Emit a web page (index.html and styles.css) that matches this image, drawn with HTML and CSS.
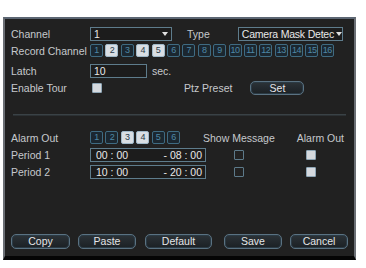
FILE: index.html
```html
<!DOCTYPE html>
<html lang="en">
<head>
  <meta charset="UTF-8">
  <title>Alarm Setup</title>
  <link rel="stylesheet" href="styles.css">
</head>
<body>

  <div class="panel">

    <div class="row">
      <span class="label">Channel</span>
      <div class="select sel-channel"><span>1</span><span class="arrow"></span></div>
      <span class="label type-label">Type</span>
      <div class="select sel-type"><span class="clip">Camera Mask Detec</span><span class="arrow"></span></div>
    </div>

    <div class="row">
      <span class="label">Record Channel</span>
      <div class="boxes">
        <span class="box">1</span>
        <span class="box on">2</span>
        <span class="box">3</span>
        <span class="box on">4</span>
        <span class="box on">5</span>
        <span class="box">6</span>
        <span class="box">7</span>
        <span class="box">8</span>
        <span class="box">9</span>
        <span class="box">10</span>
        <span class="box">11</span>
        <span class="box">12</span>
        <span class="box">13</span>
        <span class="box">14</span>
        <span class="box">15</span>
        <span class="box">16</span>
      </div>
    </div>

    <div class="row latch">
      <span class="label">Latch</span>
      <div class="input sel-latch">10</div>
      <span class="unit">sec.</span>
    </div>

    <div class="row">
      <span class="label">Enable Tour</span>
      <span class="check light tour-check"></span>
      <span class="label ptz-label">Ptz Preset</span>
      <span class="btn btn-set">Set</span>
    </div>

    <div class="sep"></div>

    <div class="row alarm">
      <span class="label">Alarm Out</span>
      <div class="boxes">
        <span class="box">1</span>
        <span class="box">2</span>
        <span class="box on">3</span>
        <span class="box on">4</span>
        <span class="box">5</span>
        <span class="box">6</span>
      </div>
      <span class="label show-label">Show Message</span>
      <span class="label out-label">Alarm Out</span>
    </div>

    <div class="row">
      <span class="label">Period 1</span>
      <div class="input period"><span>00 : 00</span><span>- 08 : 00</span></div>
      <span class="check dark show-check"></span>
      <span class="check light out-check"></span>
    </div>

    <div class="row">
      <span class="label">Period 2</span>
      <div class="input period"><span>10 : 00</span><span>- 20 : 00</span></div>
      <span class="check dark show-check"></span>
      <span class="check light out-check"></span>
    </div>

    <div class="buttons">
      <span class="btn btn-copy">Copy</span>
      <span class="btn btn-paste">Paste</span>
      <span class="btn btn-default">Default</span>
      <span class="btn btn-save">Save</span>
      <span class="btn btn-cancel">Cancel</span>
    </div>

  </div>

</body>
</html>
```

FILE: styles.css
```css
body {
  margin: 0;
  background: #ffffff;
  font-family: "Liberation Sans", Arial, sans-serif;
  font-size: 10.5px;
}
.panel {
  margin: 17px 0 0 3px;
  width: 343px;
  height: 231px;
  background: #212121;
  border-top: 2px solid #5c6673;
  border-left: 2px solid #6b6f75;
  border-right: 2px solid #6b6f75;
  border-bottom: 4px solid #050505;
  padding: 6px 0 0 6px;
  display: flex;
  flex-direction: column;
  color: #c6c9cd;
}
.row {
  display: flex;
  align-items: center;
  height: 17px;
}
.label {
  width: 79px;
  flex: none;
  white-space: nowrap;
}
.select, .input {
  height: 12px;
  border: 1px solid #5e7c8c;
  background: #1c1c1c;
  color: #e8e8e8;
  display: flex;
  align-items: center;
  justify-content: space-between;
  padding: 0 3px;
  line-height: 12px;
  flex: none;
}
.clip {
  white-space: nowrap;
  letter-spacing: -0.2px;
}
.sel-channel {
  width: 74px;
}
.arrow {
  width: 0;
  height: 0;
  border-left: 3px solid transparent;
  border-right: 3px solid transparent;
  border-top: 4px solid #e0e0e0;
  flex: none;
  margin-left: 2px;
}
.type-label {
  width: auto;
  margin-left: 15px;
}
.sel-type {
  width: 98px;
  margin-left: 28px;
  padding: 0 2px 0 3px;
}
.boxes {
  display: flex;
  gap: 2.4px;
}
.box {
  width: 11px;
  height: 11px;
  border: 1px solid #3f6b82;
  border-radius: 2px;
  background: #1b2730;
  color: #4f88a6;
  font-size: 9px;
  line-height: 11px;
  text-align: center;
  letter-spacing: -0.5px;
  flex: none;
}
.box.on {
  background: #d9dee3;
  border-color: #9fb8c8;
  color: #2a3a48;
}
.latch {
  margin-top: 3px;
}
.sel-latch {
  width: 49px;
  justify-content: flex-start;
}
.unit {
  margin-left: 5px;
}
.check {
  width: 8px;
  height: 8px;
  border: 1px solid #5d7a8a;
  border-radius: 1px;
  flex: none;
}
.check.light {
  background: #d5d9de;
  border-color: #8ea6b6;
}
.check.dark {
  background: #222;
}
.tour-check {
  margin-left: 2px;
}
.ptz-label {
  width: auto;
  margin-left: 82px;
}
.btn {
  height: 12px;
  width: 56px;
  border: 1px solid #5a7282;
  border-radius: 5px;
  background: linear-gradient(#2c3338, #1b2024);
  box-shadow: inset 0 0 0 1px #2b3a44;
  color: #e4e6e8;
  text-align: center;
  line-height: 12px;
  flex: none;
}
.btn-set {
  margin-left: 18px;
  width: 52px;
}
.sep {
  margin: 18px 8px 0 2px;
  height: 1px;
  background: #3a4246;
  border-bottom: 1px solid #2c3134;
}
.alarm {
  margin-top: 13px;
}
.show-label {
  width: auto;
  margin-left: 23px;
}
.out-label {
  width: auto;
  margin-left: 22px;
}
.period {
  width: 106px;
  padding: 0 3px 0 5px;
}
.show-check {
  margin-left: 28px;
}
.out-check {
  margin-left: 62px;
}
.buttons {
  margin-top: auto;
  margin-bottom: 7px;
  display: flex;
  align-items: center;
}
.buttons .btn {
  height: 13px;
  line-height: 13px;
}
.btn-copy {
  width: 57px;
}
.btn-paste {
  margin-left: 8px;
}
.btn-default {
  margin-left: 9px;
  width: 65px;
}
.btn-save {
  margin-left: 12px;
}
.btn-cancel {
  margin-left: 8px;
}
```
